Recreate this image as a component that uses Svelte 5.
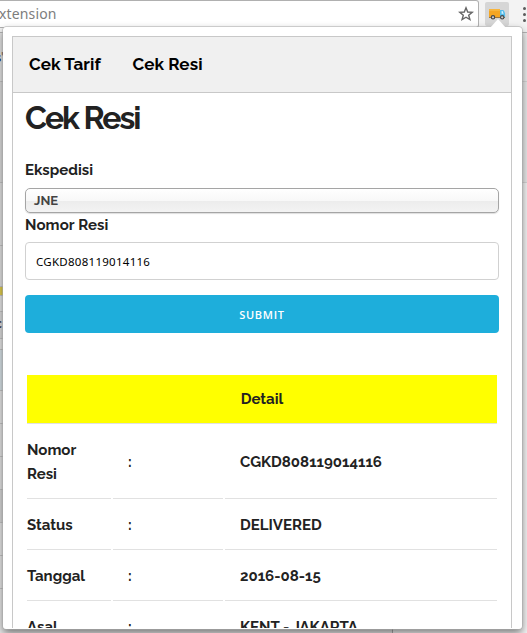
<script>
  const bands = [
    { h: 49, c: '#e6e6e6' }, { h: 101, c: '#dedede' }, { h: 63, c: '#e4e4e4' },
    { h: 41, c: '#e4e4e4' }, { h: 9, c: '#e2cf4e' }, { h: 16, c: '#e8e8e8' },
    { h: 27, c: '#dedede' }, { h: 11, c: '#e8e8e8' }, { h: 41, c: '#d9e3e8' },
    { h: 33, c: '#e8e8e8' }, { h: 33, c: '#e6e6e6' }, { h: 33, c: '#e6e6e6' },
    { h: 33, c: '#d9d9d9' }, { h: 33, c: '#e8e8e8' }, { h: 33, c: '#e8e8e8' }, { h: 60, c: '#e8e8e8' }
  ];
  const rows = [
    { label: 'Nomor Resi', value: 'CGKD808119014116' },
    { label: 'Status', value: 'DELIVERED' },
    { label: 'Tanggal', value: '2016-08-15' },
    { label: 'Asal', value: 'KENT - JAKARTA' }
  ];
</script>

<div class="screen">
  <header class="toolbar">
    <div class="address"><span>xtension</span>
      <svg class="star" width="16" height="16" viewBox="0 0 16 16"><path d="M8 1.8 9.7 6l4.5.3-3.5 2.9 1.2 4.4L8 11.2l-3.9 2.4 1.2-4.4-3.5-2.9L6.3 6Z" fill="none" stroke="#666" stroke-width="1.4" /></svg>
    </div>
    <div class="extension">
      <svg width="24" height="24" viewBox="0 0 24 24">
        <path d="M4 7h11v9H4z" fill="#f5a623" /><path d="M4 7h11v2H4z" fill="#f8b53c" />
        <path d="M15 8h2.7q1 0 1.4 1l1 2.5V16H15z" fill="#55bdeb" />
        <path d="M16.6 9h1l1 2.8h-2z" fill="#d9f3ff" />
        <path d="M4 15h16v1H4z" fill="#9b7740" />
        <circle cx="8" cy="15.3" r="1.7" fill="#ccc" stroke="#464646" stroke-width="1.1" />
        <circle cx="17.2" cy="15.3" r="1.7" fill="#ccc" stroke="#464646" stroke-width="1.1" />
      </svg>
    </div>
    <div class="dots"><i></i><i></i><i></i></div>
  </header>
  <div class="backdrop">
    <div class="left">
      {#each bands as band}
        <div class="band" style="height:{band.h}px;background:{band.c}"></div>
      {/each}
    </div>
    <div class="right"><div class="band head"></div><div class="band mid"></div></div>
  </div>
  <span class="peek top">s'</span>
  <span class="peek low">c</span>
  <span class="peek foot">Tarif</span>
  <i class="rule"></i>

  <div class="arrow"></div>
  <section class="popup">
    <div class="panel">
      <nav><span class="tarif">Cek Tarif</span><span>Cek Resi</span></nav>
      <main>
        <h1>Cek Resi</h1>
        <div class="label eks">Ekspedisi</div>
        <div class="select">JNE</div>
        <div class="label nomor">Nomor Resi</div>
        <div class="input">CGKD808119014116</div>
        <div class="submit">SUBMIT</div>
        <table>
          <colgroup><col class="c1" /><col class="c2" /><col /></colgroup>
          <thead><tr><th colspan="3">Detail</th></tr></thead>
          <tbody>
            {#each rows as row}
              <tr><td class="key">{row.label}</td><td>:</td><td>{row.value}</td></tr>
            {/each}
          </tbody>
        </table>
      </main>
    </div>
  </section>
</div>

<style>
  .screen { position: relative; width: 527px; height: 633px; overflow: hidden; background: #f3f3f3; font-family: Raleway, Lato, sans-serif; color: #222; }
  .toolbar { display: flex; height: 33px; box-sizing: border-box; background: #f3f3f3; border-bottom: 1px solid #b5b5b5; }
  .address { display: flex; justify-content: space-between; width: 479px; height: 28px; box-sizing: border-box; background: #fff; border: 1px solid #b0b0b0; border-left: 0; border-radius: 0 3px 3px 0; font: 14px/26px "Noto Sans", sans-serif; color: #7d7d7d; }
  .address span { margin-left: -1px; letter-spacing: .15px; }
  .star { margin: 5px 4px 0 0; }
  .extension { width: 24px; height: 24px; margin: 2px 0 0 6px; border-radius: 2px; background: #d6d6d6; }
  .dots { display: flex; flex-direction: column; gap: 3px; margin: 7px 0 0 14px; }
  .dots i { width: 3px; height: 3px; border-radius: 50%; background: #5c5c5c; }
  .backdrop { display: flex; height: 600px; overflow: hidden; }
  .left { width: 392px; }
  .right { flex: 1; background: #f3f3f3; }
  .band { box-sizing: border-box; border-bottom: 1px solid #c6c6c6; }
  .head { height: 49px; background: #ebebeb; border-color: #d5d5d5; }
  .mid { height: 101px; background: #e8e8e8; border-color: #d5d5d5; }
  .peek { position: absolute; font: 700 14px/16px Lato, sans-serif; color: #223; }
  .top { left: -5px; top: 49px; }
  .low { left: -5px; top: 315px; }
  .foot { left: 301px; top: 630px; font-weight: 400; font-size: 12px; color: #555; }
  .rule { position: absolute; left: 392px; top: 629px; width: 1px; height: 4px; background: #aaa; }
  .arrow { position: absolute; left: 490px; top: 19px; width: 16px; height: 9px; background: #fff; clip-path: polygon(50% 0, 100% 100%, 0 100%); z-index: 2; }
  .popup { position: absolute; left: 3px; top: 27px; width: 519px; height: 602px; box-sizing: border-box; padding: 9px 10px 1px 9px; overflow: hidden; background: #fff; border-radius: 3px; box-shadow: 0 0 0 .5px #aaa, 0 4px 8px rgba(0,0,0,.5); }
  .panel { height: 592px; box-sizing: border-box; overflow: hidden; border: 1px solid #c8c8c8; border-bottom: 0; }
  nav { display: flex; height: 56px; box-sizing: border-box; padding-left: 16px; border-bottom: 1px solid #c8c8c8; background: #f0f0f0; color: #000; font-size: 17px; font-weight: 700; line-height: 54px; }
  nav span { white-space: nowrap; letter-spacing: .1px; }
  .tarif { width: 103.5px; }
  main { padding: 0 12px; font-weight: 700; }
  h1 { margin: 6px 0 21px; font-size: 32px; line-height: 38px; letter-spacing: -2px; }
  .label { font-size: 15px; line-height: 24px; white-space: nowrap; }
  .eks { height: 30px; }
  .select { height: 25px; box-sizing: border-box; padding-left: 8px; border: 1px solid #a5a5a5; border-radius: 5px; background: linear-gradient(#fff 0, #f8f8f8 50%, #ececec 52%, #f3f3f3); box-shadow: 0 1px 1px #0002; font-size: 13px; line-height: 23px; color: #444; }
  .nomor { height: 29px; letter-spacing: .1px; }
  .input { height: 38px; box-sizing: border-box; padding-left: 10px; border: 1px solid #d1d1d1; border-radius: 4px; font: 400 11.5px/38px "Noto Sans", sans-serif; letter-spacing: .27px; color: #000; }
  .submit { height: 38px; margin-top: 15px; border-radius: 4px; background: #1eaedb; color: #fff; text-align: center; font: 600 11px/40px "Open Sans", sans-serif; letter-spacing: .75px; }
  table { width: 474px; margin-top: 40px; padding-top: 2px; border-collapse: separate; border-spacing: 2px 0; table-layout: fixed; font-size: 15px; line-height: 24px; }
  .c1 { width: 84px; }
  .c2 { width: 110px; }
  th { height: 49px; box-sizing: border-box; padding: 0; background: #ff0; border-bottom: 1px solid #e1e1e1; }
  td { box-sizing: border-box; border-bottom: 1px solid #e1e1e1; padding: 14px 15px 12px; height: 51px; vertical-align: middle; }
  td.key { padding-left: 0; }
</style>
